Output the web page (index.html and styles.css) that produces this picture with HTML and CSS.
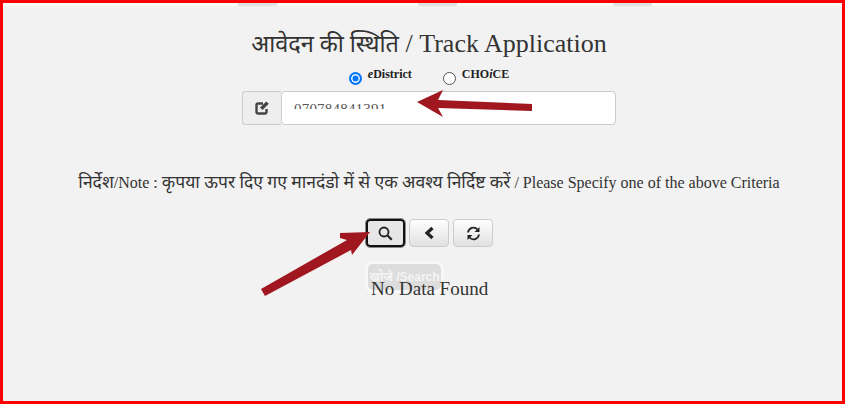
FILE: index.html
```html
<!DOCTYPE html>
<html lang="en">
<head>
	<meta charset="UTF-8">
	<title>Track Application</title>
	<link rel="stylesheet" href="styles.css">
</head>
<body>
	<div class="frame">
		<div class="top_strip">
			<span class="tab"></span><span class="tab"></span><span class="tab tab_last"></span>
		</div>
		<h1 class="title"><span class="hi">आवेदन की स्थिति</span> / Track Application</h1>
		<div class="radio_row">
			<label class="radio_item"><span class="radio on"></span><b><i>e</i>District</b></label>
			<label class="radio_item"><span class="radio"></span><b>CHO<i>i</i>CE</b></label>
		</div>
		<div class="input_group">
			<span class="addon">
				<svg width="14" height="14" viewBox="0 0 14 14"><path d="M11.500 8v3A1.500 1.500 0 0 1 10 12.500H3A1.500 1.500 0 0 1 1.500 11V4A1.500 1.500 0 0 1 3 2.500h5" fill="none" stroke="#444" stroke-width="2.400"/><path d="M5 6.500l2.500 2.500L13.800 2.700 11.300.5z" fill="#444"/></svg>
			</span>
			<div class="input_box"><span class="input_text">070784841391</span></div>
		</div>
		<p class="note"><span class="hi">निर्देश</span>/Note : <span class="hi">कृपया ऊपर दिए गए मानदंडो में से एक अवश्य निर्दिष्ट करें</span> / Please Specify one of the above Criteria</p>
		<div class="btn_row">
			<button class="btn btn_focus">
				<svg width="15" height="15" viewBox="0 0 15 15"><circle cx="6" cy="6" r="4.500" fill="none" stroke="#222" stroke-width="1.800"/><path d="M9.500 9.500l4.300 4.300" stroke="#222" stroke-width="2.200"/></svg>
			</button>
			<button class="btn">
				<svg width="12" height="14" viewBox="0 0 12 14"><path d="M9.500 2L4 7l5.500 5" fill="none" stroke="#222" stroke-width="3.200"/></svg>
			</button>
			<button class="btn">
				<svg width="15" height="15" viewBox="0 0 15 15"><path d="M2 6.500A5.500 5.500 0 0 1 11.500 3.500" fill="none" stroke="#222" stroke-width="1.800"/><path d="M13.500 1v5h-5z" fill="#222"/><path d="M13 8.500A5.500 5.500 0 0 1 3.500 11.500" fill="none" stroke="#222" stroke-width="1.800"/><path d="M1.500 14V9h5z" fill="#222"/></svg>
			</button>
		</div>
		<div class="result">
			<span class="search_tip">खोजे /Search</span>
			<p class="no_data">No Data Found</p>
		</div>
		<svg class="arrows" width="845" height="404" viewBox="0 0 845 404">
			<path d="M417 102L443 90L438 100L532 104L532 111L438 108L443 117z" fill="#a01720"/>
			<path d="M261 289L347 240L340 238L340 233L370 232L352 255L351 250L265 296z" fill="#a01720"/>
		</svg>
	</div>
</body>
</html>
```

FILE: styles.css
```css
body{margin:0;font-family:"Liberation Serif","Noto Sans",serif;color:#333;}
.frame{position:relative;box-sizing:border-box;width:845px;height:404px;border:3px solid #f00;background:#f2f2f2;overflow:hidden;}
.top_strip{display:flex;gap:141px;height:3px;padding-left:235px;background:#fbfbfb;}
.tab{width:39px;height:3px;background:#e2e2e2;}
.tab_last{margin-left:15px;}
.title{margin:23px 0 0;padding-left:13px;font-size:26px;line-height:30px;font-weight:normal;text-align:center;}
.title .hi{font-size:23.500px;}
.radio_row{display:flex;justify-content:center;gap:31px;height:22px;margin-top:9px;padding-left:13px;}
.radio_item{display:flex;gap:6px;font-size:12px;line-height:12px;color:#222;}
.radio{box-sizing:border-box;display:block;width:13px;height:13px;margin-top:4px;border:1px solid #555;border-radius:50%;background:#fff;}
.radio.on{border:2px solid #0075ff;box-shadow:inset 0 0 0 1.500px #fff;background:#0075ff;}
.input_group{display:flex;width:374px;height:34px;margin:1px 0 0 239px;}
.addon{display:flex;align-items:center;justify-content:center;box-sizing:border-box;width:39px;height:34px;background:#eee;border:1px solid #ccc;border-right:0;border-radius:4px 0 0 4px;}
.input_box{box-sizing:border-box;flex:1;padding:10px 12px;background:#fff;border:1px solid #ccc;border-radius:4px;}
.input_text{display:block;height:7px;overflow:hidden;font-size:15px;line-height:15px;letter-spacing:.2px;color:#555;}
.note{margin:46px 0 0;padding-left:13px;font-size:16px;line-height:22px;text-align:center;color:#333;white-space:nowrap;}
.note .hi{font-size:17.500px;}
.btn_row{display:flex;gap:4px;margin:25px 0 0 363px;}
.btn{display:flex;align-items:center;justify-content:center;box-sizing:border-box;width:40px;height:28px;padding:0;background:linear-gradient(#fff,#e0e0e0);border:1px solid #ccc;border-radius:4px;}
.btn_focus{width:39px;background:#e6e6e6;border:2px solid #111;outline:1px solid #888;}
.result{position:relative;margin:14px 0 0 362px;height:40px;}
.search_tip{position:absolute;top:0;left:0;box-sizing:border-box;width:79px;height:32px;padding-top:6px;font:bold 12px/14px "Liberation Sans","Noto Sans",sans-serif;text-align:center;white-space:nowrap;color:#f4f4f4;background:#ddd;border:3px solid #f8f8f8;border-radius:8px;}
.no_data{position:absolute;top:17px;left:6px;margin:0;font-size:19px;line-height:22px;color:#333;white-space:nowrap;}
.arrows{position:absolute;top:-3px;left:-3px;}
```
